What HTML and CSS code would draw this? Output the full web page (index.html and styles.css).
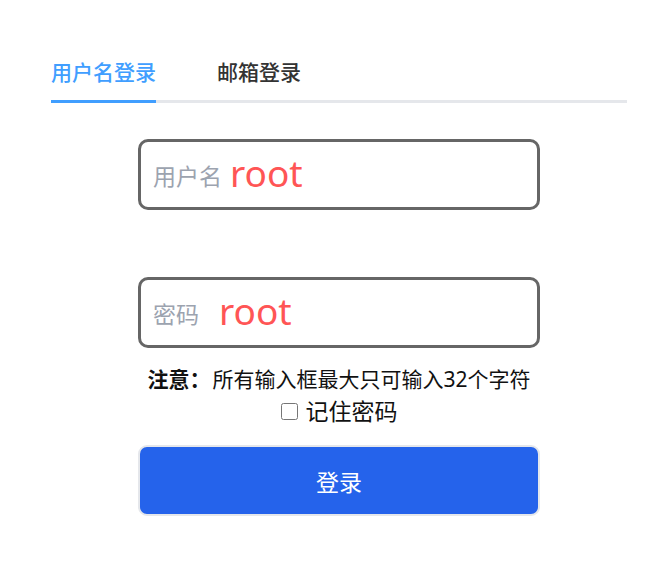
FILE: index.html
```
<!DOCTYPE html>
<html lang="zh-CN">
<head>
    <meta charset="UTF-8">
    <meta name="viewport" content="width=device-width, initial-scale=1.0">
    <title>登录</title>
    <link rel="stylesheet" href="styles.css">
</head>
<body>
    <div class="login">
        <div class="tabs">
            <div class="tab active">用户名登录</div>
            <div class="tab">邮箱登录</div>
        </div>

        <form class="form">
            <label class="field">
                <span class="field-label">用户名</span>
                <input class="field-input" type="text" value="root" maxlength="32">
            </label>

            <label class="field field-pwd">
                <span class="field-label">密码</span>
                <input class="field-input" type="text" value="root" maxlength="32">
            </label>

            <p class="note"><strong>注意：</strong>所有输入框最大只可输入32个字符</p>

            <label class="remember">
                <input type="checkbox" class="remember-box">
                <span>记住密码</span>
            </label>

            <button type="button" class="btn">登录</button>
        </form>
    </div>
</body>
</html>
```

FILE: styles.css
```
body {
    margin: 0;
    background: #fff;
    font-family: "Noto Sans", "Noto Sans CJK SC", sans-serif;
    color: #111;
}
.login {
    width: 576px;
    margin: 0 0 0 51px;
    padding-top: 55px;
}
.tabs {
    display: flex;
    gap: 61px;
    border-bottom: 3px solid #e5e7eb;
}
.tab {
    font-size: 21px;
    font-weight: 500;
    line-height: 34px;
    padding-bottom: 11px;
    margin-bottom: -3px;
    border-bottom: 3px solid transparent;
    color: #333;
}
.tab.active {
    color: #409eff;
    border-bottom-color: #409eff;
}
.form {
    width: 402px;
    margin: 36px auto 0;
    display: flex;
    flex-direction: column;
    align-items: center;
}
.field {
    box-sizing: border-box;
    width: 100%;
    height: 71px;
    border: 3px solid #666;
    border-radius: 10px;
    display: flex;
    align-items: center;
    padding: 0 12px;
}
.field-pwd {
    margin-top: 67px;
}
.field-label {
    font-size: 23px;
    color: #9ca3af;
    margin-top: 1px;
    flex-shrink: 0;
}
.field-input {
    border: none;
    outline: none;
    font-family: "Noto Sans", sans-serif;
    font-size: 37px;
    color: #f55;
    width: 100%;
    padding: 0 8px;
    margin-top: -5px;
    background: transparent;
}
.field-pwd .field-input {
    padding-left: 20px;
}
.note {
    margin: 17px 0 0;
    font-size: 21px;
    line-height: 28px;
}
.note strong {
    margin-right: 2px;
}
.remember {
    display: flex;
    align-items: center;
    gap: 8px;
    margin-top: 3px;
    font-size: 23px;
    line-height: 30px;
}
.remember-box {
    width: 17px;
    height: 17px;
    margin: 0;
}
.btn {
    margin-top: 19px;
    box-sizing: border-box;
    width: 100%;
    height: 71px;
    background: #2563eb;
    color: #fff;
    border: 2px solid #e5e7eb;
    border-radius: 9px;
    font-family: "Noto Sans", "Noto Sans CJK SC", sans-serif;
    font-size: 23px;
    cursor: pointer;
}
```
